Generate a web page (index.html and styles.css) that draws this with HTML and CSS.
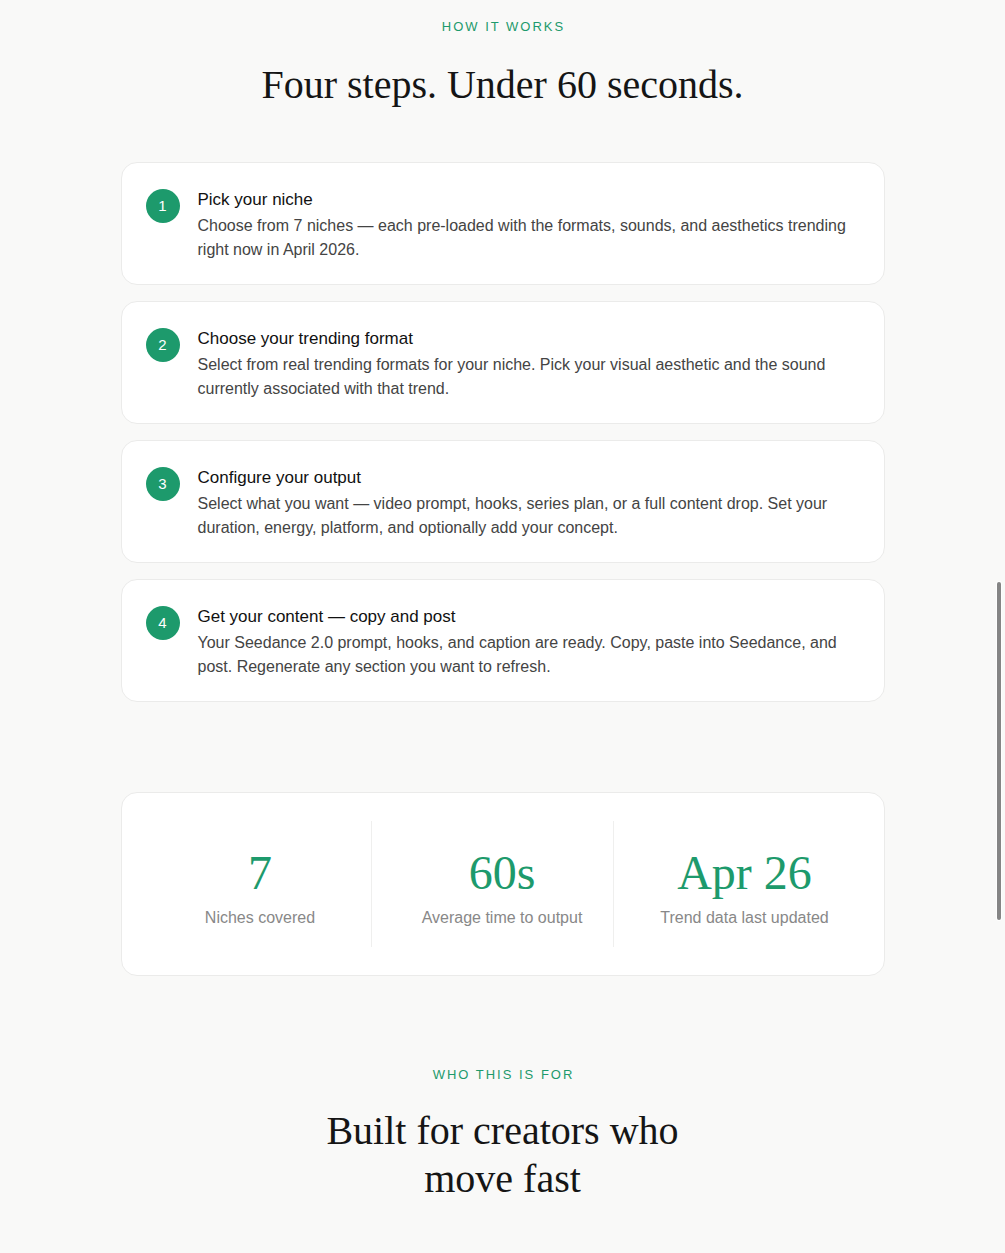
FILE: index.html
```html
<!DOCTYPE html>
<html lang="en">
<head>
<meta charset="utf-8">
<title>How it works</title>
<link rel="stylesheet" href="styles.css">
</head>
<body>
<main class="page">
  <section class="how">
    <p class="eyebrow">HOW IT WORKS</p>
    <h2 class="heading">Four steps. Under 60 seconds.</h2>
    <div class="steps">
      <div class="step">
        <div class="num">1</div>
        <div class="step-body">
          <h3 class="step-title">Pick your niche</h3>
          <p class="step-desc">Choose from 7 niches — each pre-loaded with the formats, sounds, and aesthetics trending right now in April 2026.</p>
        </div>
      </div>
      <div class="step">
        <div class="num">2</div>
        <div class="step-body">
          <h3 class="step-title">Choose your trending format</h3>
          <p class="step-desc">Select from real trending formats for your niche. Pick your visual aesthetic and the sound currently associated with that trend.</p>
        </div>
      </div>
      <div class="step">
        <div class="num">3</div>
        <div class="step-body">
          <h3 class="step-title">Configure your output</h3>
          <p class="step-desc">Select what you want — video prompt, hooks, series plan, or a full content drop. Set your duration, energy, platform, and optionally add your concept.</p>
        </div>
      </div>
      <div class="step">
        <div class="num">4</div>
        <div class="step-body">
          <h3 class="step-title">Get your content — copy and post</h3>
          <p class="step-desc">Your Seedance 2.0 prompt, hooks, and caption are ready. Copy, paste into Seedance, and post. Regenerate any section you want to refresh.</p>
        </div>
      </div>
    </div>
  </section>

  <section class="stats">
    <div class="stat">
      <div class="stat-num">7</div>
      <div class="stat-label">Niches covered</div>
    </div>
    <div class="stat">
      <div class="stat-num">60s</div>
      <div class="stat-label">Average time to output</div>
    </div>
    <div class="stat">
      <div class="stat-num">Apr 26</div>
      <div class="stat-label">Trend data last updated</div>
    </div>
  </section>

  <section class="who">
    <p class="eyebrow">WHO THIS IS FOR</p>
    <h2 class="heading heading-narrow">Built for creators who move fast</h2>
  </section>
</main>
<div class="scrollbar"></div>
</body>
</html>
```

FILE: styles.css
```css
html, body {
  margin: 0;
  padding: 0;
  height: 100%;
  overflow: hidden;
}

body {
  background: #f9f9f8;
  font-family: "Liberation Sans", Arial, Helvetica, sans-serif;
  color: #111;
}

.page {
  width: 764px;
  margin: 0 auto;
  padding-top: 17px;
}

.eyebrow {
  margin: 0;
  text-align: center;
  font-size: 13px;
  line-height: 20px;
  letter-spacing: 2px;
  color: #1d9a6c;
  padding-left: 2px;
}

.heading {
  margin: 24px 0 0;
  text-align: center;
  font-family: "Liberation Serif", "Times New Roman", serif;
  font-weight: 400;
  font-size: 40px;
  line-height: 48px;
  color: #151515;
}

.heading-narrow {
  max-width: 420px;
  margin-left: auto;
  margin-right: auto;
  margin-top: 22px;
}

.steps {
  margin-top: 53px;
  display: flex;
  flex-direction: column;
  gap: 16px;
}

.step {
  display: flex;
  align-items: flex-start;
  gap: 18px;
  background: #fff;
  border: 1px solid #ebebea;
  border-radius: 16px;
  padding: 25px 24px 22px;
}

.num {
  flex: 0 0 auto;
  width: 34px;
  height: 34px;
  margin-top: 1px;
  border-radius: 50%;
  background: #1d9a6c;
  color: #fff;
  font-size: 15px;
  line-height: 34px;
  text-align: center;
}

.step-body {
  flex: 1;
}

.step-title {
  margin: 0 0 2px;
  font-size: 17px;
  font-weight: 400;
  line-height: 24px;
  color: #111;
}

.step-desc {
  margin: 0;
  font-size: 16px;
  line-height: 24px;
  color: #444;
}

.stats {
  margin-top: 90px;
  display: grid;
  grid-template-columns: repeat(3, 1fr);
  gap: 20px;
  background: #fff;
  border: 1px solid #ebebea;
  border-radius: 16px;
  padding: 28px;
}

.stat {
  text-align: center;
  padding: 25px 0 17px;
}

.stat:not(:last-child) {
  border-right: 1px solid #efefee;
}

.stat-num {
  font-family: "Liberation Serif", "Times New Roman", serif;
  font-size: 48px;
  line-height: 53px;
  color: #1d9a6c;
}

.stat-label {
  margin-top: 7px;
  font-size: 16px;
  line-height: 24px;
  color: #888;
}

.who {
  padding-top: 89px;
}

.scrollbar {
  position: fixed;
  left: 997px;
  top: 582px;
  width: 4px;
  height: 338px;
  border-radius: 2px;
  background: #858585;
  box-shadow: 0 0 0 1px rgba(255,255,255,0.8);
}
```
